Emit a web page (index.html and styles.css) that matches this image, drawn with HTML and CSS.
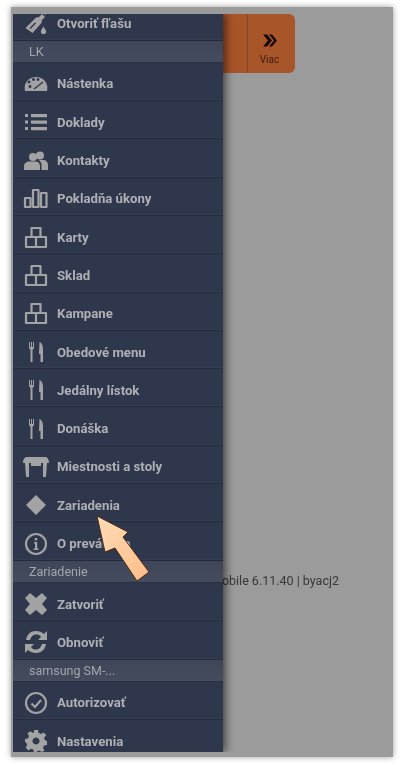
FILE: index.html
```html
<!DOCTYPE html>
<html lang="sk">
<head>
<meta charset="utf-8">
<title>Menu</title>
<link rel="stylesheet" href="styles.css">
</head>
<body>
<div class="screen">
  <nav class="drawer">
    <div class="row row-first">
      <span class="ico"><svg width="26" height="26" viewBox="0 0 26 26"><path class="f" d="M2.500 18 13 7.500 16 7l3-3 3 3-3 3-.5 3L9.500 23Z"/><path class="f" d="M20 3l1.500-1.500 2 2L22 5Z"/><path class="cutl" d="M7 18.500 12.500 13"/><path class="f" d="M20.500 16.500c1.600 2.500 2.600 3.600 2.600 5a2.600 2.600 0 0 1-5.200 0c0-1.400 1-2.500 2.600-5Z"/></svg></span>
      <span class="label">Otvoriť fľašu</span>
    </div>
    <div class="head">LK</div>
    <div class="row h38">
      <span class="ico"><svg width="24" height="16" viewBox="0 0 24 16"><path class="f" d="M1 15C-1 7 5 1 12 1s13 6 11 14Z"/><path class="cut" d="M6 12a1.500 1.500 0 1 1 .01 0ZM5 7.500a1.500 1.500 0 1 1 .01 0ZM9.500 5a1.500 1.500 0 1 1 .01 0ZM14 5a1.500 1.500 0 1 1 .01 0Z"/><path class="cutl" d="M10 13 19 6"/></svg></span>
      <span class="label">Nástenka</span>
    </div>
    <div class="row h38">
      <span class="ico"><svg width="24" height="18" viewBox="0 0 24 18"><path class="f" d="M1 1h3v3H1ZM1 7.500h3v3H1ZM1 14h3v3H1ZM7 1h16v3.200H7ZM7 7.500h16v3.200H7ZM7 14h16v3.200H7Z"/></svg></span>
      <span class="label">Doklady</span>
    </div>
    <div class="row h38">
      <span class="ico"><svg width="24" height="20" viewBox="0 0 24 20"><circle class="f" cx="9" cy="6" r="4"/><circle class="f" cx="16" cy="4.500" r="4"/><path class="f" d="M0 19v-4c0-3 3-4.500 5-4.500h7c2 0 4 2 4 4.500V19Z"/><path class="f" d="M17.500 19v-5c0-2-1-3.500-2.500-5h4c3 0 5 2 5 5v5Z"/></svg></span>
      <span class="label">Kontakty</span>
    </div>
    <div class="row h38">
      <span class="ico"><svg width="24" height="19" viewBox="0 0 24 19"><path class="s" d="M1 9h5.500v9H1ZM9 1h5.500v17H9ZM17 4h5.500v14H17Z"/></svg></span>
      <span class="label">Pokladňa úkony</span>
    </div>
    <div class="row h38">
      <span class="ico"><svg width="22" height="21" viewBox="0 0 22 21"><path class="s" d="M6.500 1h9v9h-9ZM1 10h10v10H1ZM11 10h10v10H11Z"/></svg></span>
      <span class="label">Karty</span>
    </div>
    <div class="row h38">
      <span class="ico"><svg width="22" height="21" viewBox="0 0 22 21"><path class="s" d="M6.500 1h9v9h-9ZM1 10h10v10H1ZM11 10h10v10H11Z"/></svg></span>
      <span class="label">Sklad</span>
    </div>
    <div class="row h38">
      <span class="ico"><svg width="22" height="21" viewBox="0 0 22 21"><path class="s" d="M6.500 1h9v9h-9ZM1 10h10v10H1ZM11 10h10v10H11Z"/></svg></span>
      <span class="label">Kampane</span>
    </div>
    <div class="row h38">
      <span class="ico"><svg width="16" height="20" viewBox="0 0 16 20"><path class="f" d="M1 0h1v5h1V0h1v5h1V0h1v6L4.500 8v12h-2V8L1 6ZM11.500 0C14 1 15 4 15 7v13h-2.500v-8H11Z"/></svg></span>
      <span class="label">Obedové menu</span>
    </div>
    <div class="row h38">
      <span class="ico"><svg width="16" height="20" viewBox="0 0 16 20"><path class="f" d="M1 0h1v5h1V0h1v5h1V0h1v6L4.500 8v12h-2V8L1 6ZM11.500 0C14 1 15 4 15 7v13h-2.500v-8H11Z"/></svg></span>
      <span class="label">Jedálny lístok</span>
    </div>
    <div class="row h38">
      <span class="ico"><svg width="16" height="20" viewBox="0 0 16 20"><path class="f" d="M1 0h1v5h1V0h1v5h1V0h1v6L4.500 8v12h-2V8L1 6ZM11.500 0C14 1 15 4 15 7v13h-2.500v-8H11Z"/></svg></span>
      <span class="label">Donáška</span>
    </div>
    <div class="row h38">
      <span class="ico"><svg width="26" height="20" viewBox="0 0 26 20"><path class="f" d="M4 0h18c2 0 4 2 4 6H0c0-4 2-6 4-6ZM2 6h4v14H3ZM20 6h4l-1 14h-3ZM8 6h10v3H8Z"/></svg></span>
      <span class="label">Miestnosti a stoly</span>
    </div>
    <div class="row h38">
      <span class="ico"><svg width="22" height="22" viewBox="0 0 22 22"><path class="f" d="M11 1l10 10-10 10L1 11Z"/></svg></span>
      <span class="label">Zariadenia</span>
    </div>
    <div class="row h38">
      <span class="ico"><svg width="22" height="22" viewBox="0 0 22 22"><circle class="s" cx="11" cy="11" r="10"/><path class="f" d="M9.800 5h2.400v2.400H9.800ZM9 9h3.200v6.500H13.500V17H8.700v-1.500H10V10.500H9Z"/></svg></span>
      <span class="label">O prevádzke</span>
    </div>
    <div class="head">Zariadenie</div>
    <div class="row h38">
      <span class="ico"><svg width="24" height="24" viewBox="0 0 24 24"><path class="f" d="M6 1l6 5 6-5 5 5-5 6 5 6-5 5-6-5-6 5-5-5 5-6-5-6Z"/></svg></span>
      <span class="label">Zatvoriť</span>
    </div>
    <div class="row h38">
      <span class="ico"><svg width="26" height="26" viewBox="0 0 26 26"><path class="f" d="M3 11C4 5 8 2 13 2c3 0 6 1 8 3l3-3v9h-9l3-3c-1-2-3-2.500-5-2.500-3 0-5 2-6 5.500ZM23 15c-1 6-5 9-10 9-3 0-6-1-8-3l-3 3v-9h9l-3 3c1 2 3 2.500 5 2.500 3 0 5-2 6-5.500Z"/></svg></span>
      <span class="label">Obnoviť</span>
    </div>
    <div class="head">samsung SM-...</div>
    <div class="row h38">
      <span class="ico"><svg width="22" height="22" viewBox="0 0 22 22"><circle class="s" cx="11" cy="11" r="10"/><path class="chk" d="M6.500 11.500 10 15l6-7"/></svg></span>
      <span class="label">Autorizovať</span>
    </div>
    <div class="row h38">
      <span class="ico"><svg width="22" height="22" viewBox="0 0 22 22"><path class="f" fill-rule="evenodd" d="M9 0h4l.6 3 2.400 1 2.600-1.600 2.800 2.800L19 7.800l1 2.400 2 .8v4l-3 .6-1 2.400 1.600 2.600-2.800 1.400-2.600-1.600-2.400 1-.8 1H9l-.6-2.600-2.400-1-2.600 1.600-2.800-2.800L2.200 15l-1-2.400L0 12V9l3-.6 1-2.400-1.600-2.600L5.200 1.200l2.600 1.600L9 2.500ZM11 7.500a3.500 3.500 0 1 0 .01 0Z"/></svg></span>
      <span class="label">Nastavenia</span>
    </div>
  </nav>
  <main class="main">
    <div class="tab">
      <div class="tab-spacer"></div>
      <div class="tab-more">
        <svg width="16" height="15" viewBox="0 0 16 14"><path class="chev" d="M1 1h4l5 6-5 6H1l5-6ZM7 1h3l5 6-5 6H7l5-6Z"/></svg>
        <span class="tab-text">Viac</span>
      </div>
    </div>
    <p class="version">Mobile 6.11.40 | byacj2</p>
  </main>
  <svg class="pointer" width="60" height="72" viewBox="0 0 60 72"><defs><linearGradient id="pg" x1="0" y1="0" x2="1" y2="1"><stop offset="0" stop-color="#ffdcb8"/><stop offset="1" stop-color="#fdbd86"/></linearGradient></defs><path class="arrow" d="M3 2 34 18 29 23 55 58 43 67 21 34 11 38Z"/></svg>
</div>
</body>
</html>
```
FILE: styles.css
```css
* { box-sizing: border-box; }
html, body { margin: 0; padding: 0; background: #fff; }
body { width: 401px; height: 765px; overflow: hidden; font-family: Roboto, "Liberation Sans", sans-serif; }
.screen {
  position: relative;
  display: flex;
  width: 382px;
  height: 750px;
  margin: 7px 0 0 11px;
  padding: 7px 0 5px 2px;
  background: #9b9b9b;
  box-shadow: 0 0 6px rgba(0,0,0,.4);
  filter: blur(.5px);
}
.drawer {
  position: relative;
  z-index: 1;
  flex: 0 0 210px;
  display: flex;
  flex-direction: column;
  overflow: hidden;
  background: #2f374d;
  box-shadow: 3px 0 8px rgba(0,0,0,.55);
  clip-path: inset(0 -14px 0 0);
}
.row {
  flex: none;
  display: flex;
  align-items: center;
  border-bottom: 1px solid #252b3d;
  box-shadow: inset 0 -1px 0 #363e54;
}
.h38 { height: 38.3px; padding-top: 5px; }
.row-first { height: 26.5px; padding-bottom: 7px; }
.ico { flex: 0 0 44px; display: flex; align-items: center; justify-content: center; padding-left: 1px; }
.ico svg { display: block; overflow: visible; }
.label { color: #b0b0b4; font-size: 13.2px; font-weight: 700; white-space: nowrap; }
.head {
  flex: none;
  height: 22.300px;
  padding-left: 16px;
  line-height: 21px;
  font-size: 12.500px;
  color: #a4a6ac;
  background: linear-gradient(#3f4659, #454c5e);
  border-bottom: 1px solid #2a3043;
}
.f { fill: #a3a3a3; }
.s { fill: none; stroke: #a3a3a3; stroke-width: 2.200; stroke-linejoin: round; }
.chk { fill: none; stroke: #a3a3a3; stroke-width: 2.200; }
.cut { fill: #2f374d; }
.cutl { fill: none; stroke: #2f374d; stroke-width: 1.500; }
.main { flex: 1; min-width: 0; display: flex; flex-direction: column; align-items: flex-start; }
.tab {
  flex: none;
  display: flex;
  width: 72px;
  height: 59px;
  background: #a9552a;
  border-radius: 0 6px 6px 0;
}
.tab-spacer { flex: 0 0 25px; border-right: 1px solid #8a4420; }
.tab-more { flex: 1; display: flex; flex-direction: column; align-items: center; gap: 6px; padding: 19px 4px 0 0; }
.tab-more svg { display: block; }
.chev { fill: #140903; }
.tab-text { font-size: 10px; line-height: 11px; color: #3b1c0b; }
.version {
  margin: 499px 0 0 -12px;
  font-size: 12.500px;
  line-height: 17px;
  white-space: nowrap;
  color: #383838;
}
.pointer { position: absolute; left: 83px; top: 507px; z-index: 2; }
.arrow { fill: url(#pg); stroke: #4a2a14; stroke-width: 1; }
```
